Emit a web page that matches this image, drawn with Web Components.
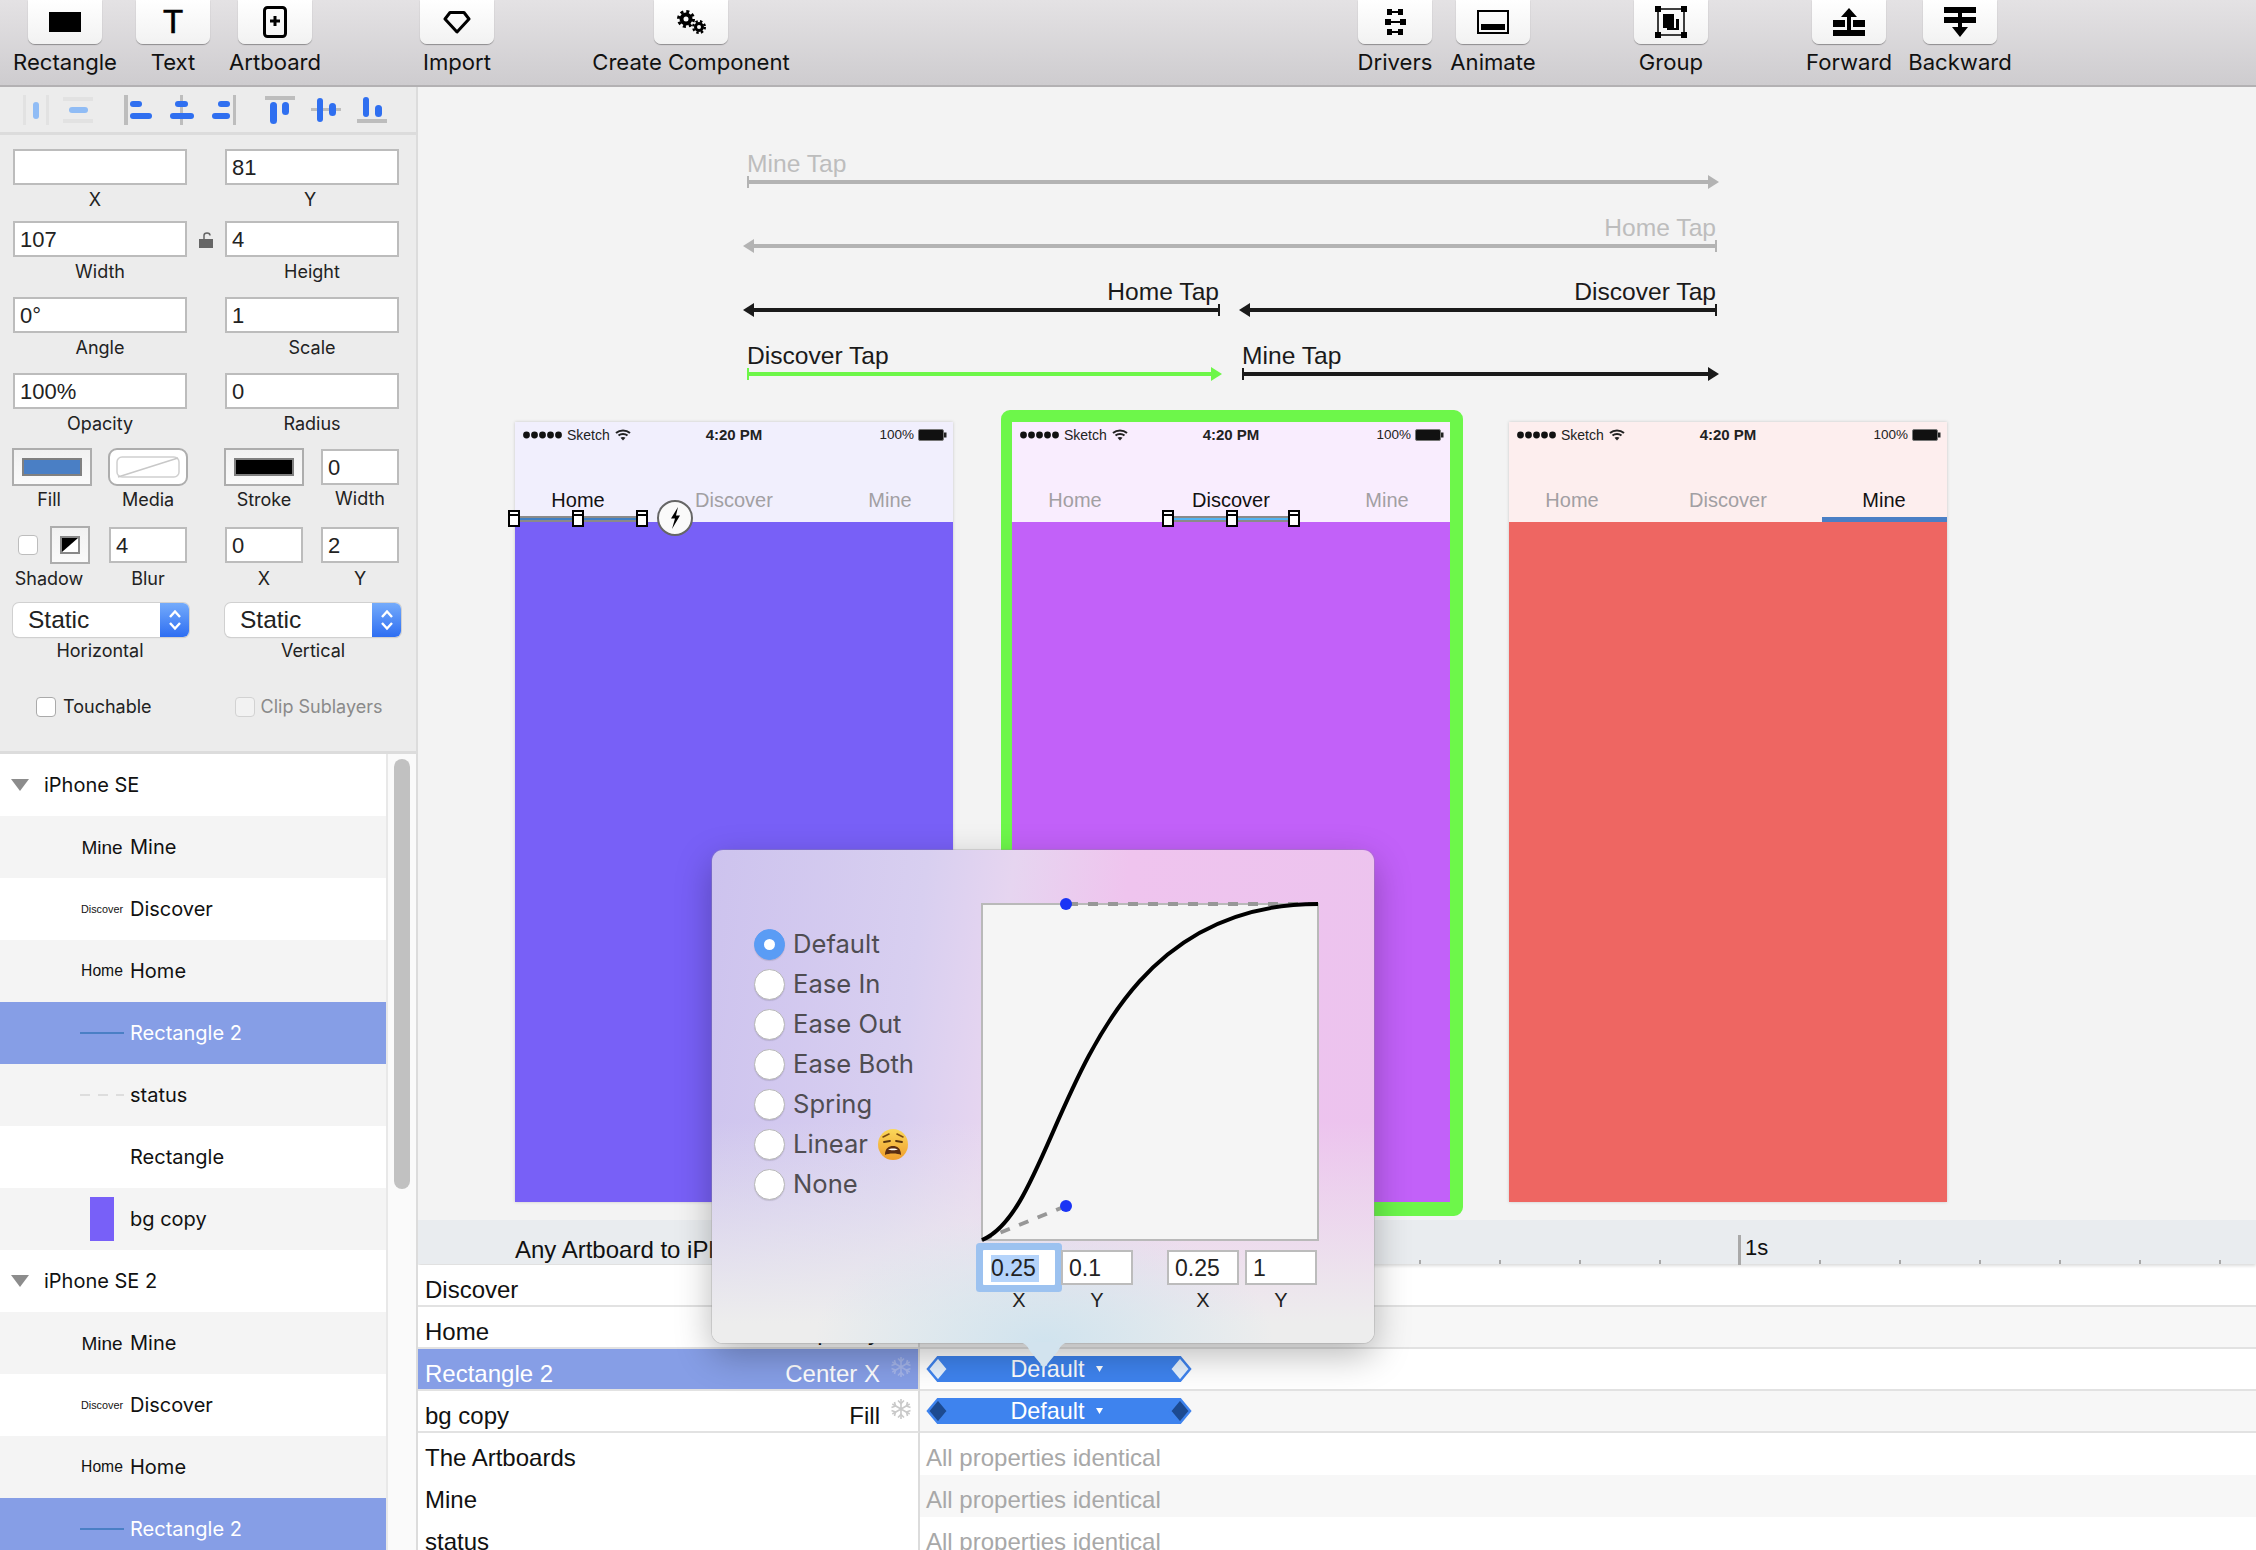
<!DOCTYPE html>
<html>
<head>
<meta charset="utf-8">
<title>Animation editor</title>
<style>
    html, body { margin: 0; height: 100%; overflow: hidden; background: #f3f3f3; }
</style>
</head>
<body>
<app-window></app-window>

<script>
const UI_FONT = `Inter, 'Liberation Sans', sans-serif`;
const HELV = `'Liberation Sans', Arial, sans-serif`;

class ToolButton extends HTMLElement {
    constructor() {
        super();
        this.attachShadow({ mode: "open" });
        this.shadowRoot.innerHTML = /*html*/ `
            <style>
                :host { display: flex; flex-direction: column; align-items: center; width: 74px; flex: none; }
                .btn {
                    width: 74px; height: 44px; box-sizing: border-box; border-radius: 0 0 7px 7px;
                    background: linear-gradient(#fff, #f2f2f2);
                    box-shadow: 0 1px 1px rgba(0,0,0,.35);
                    display: flex; align-items: center; justify-content: center;
                    font: 33px/44px ${HELV}; color: #000; -webkit-text-stroke: .6px #000;
                }
                .label { font: 22.1px/26px ${UI_FONT}; white-space: nowrap; margin-top: 5px; color: #111; }
            </style>
            <div class="btn"><slot></slot></div>
            <div class="label">${this.getAttribute("label")}</div>
        `;
    }
}
customElements.define("tool-button", ToolButton);

class ToolBar extends HTMLElement {
    constructor() {
        super();
        this.attachShadow({ mode: "open" });
        this.shadowRoot.innerHTML = /*html*/ `
            <style>
                :host {
                    display: flex; height: 85px; padding-left: 28px; box-sizing: content-box;
                    background: linear-gradient(#e4e2e4, #cecccf);
                    border-bottom: 2px solid #b3b1b3;
                }
            </style>
            <slot></slot>
        `;
    }
}
customElements.define("tool-bar", ToolBar);

class AlignBar extends HTMLElement {
    constructor() {
        super();
        this.attachShadow({ mode: "open" });
        const bar = (x, y, w, h, c) => `<rect x="${x}" y="${y - 87}" width="${w}" height="${h}" rx="${c === "g" || c === "l" ? 0 : Math.min(w, h) / 2}" fill="${c === "g" ? "#bdbdbd" : c === "l" ? "#e2e2e2" : c === "p" ? "#90bcf5" : "#2f6ff0"}"/>`;
        this.shadowRoot.innerHTML = /*html*/ `
            <style>
                :host { display: block; height: 45px; border-bottom: 3px solid #dcdcdc; }
                svg { display: block; }
            </style>
            <svg width="416" height="45">
                ${bar(23, 95, 3, 30, "l")}${bar(46, 95, 3, 30, "l")}${bar(33, 102, 6, 17, "p")}
                ${bar(63, 97, 30, 4, "l")}${bar(63, 119, 30, 4, "l")}${bar(69, 107, 19, 6, "p")}
                ${bar(124, 95, 4, 30, "g")}${bar(130, 101, 12, 6, "b")}${bar(130, 113, 22, 6, "b")}
                ${bar(180, 95, 3, 30, "g")}${bar(175, 101, 13, 6, "b")}${bar(170, 113, 24, 6, "b")}
                ${bar(233, 95, 3, 30, "g")}${bar(218, 101, 12, 6, "b")}${bar(212, 113, 18, 6, "b")}
                ${bar(265, 96, 30, 4, "g")}${bar(270, 102, 7, 22, "b")}${bar(282, 102, 7, 13, "b")}
                ${bar(311, 108, 30, 3, "g")}${bar(317, 98, 6, 24, "b")}${bar(329, 103, 7, 13, "b")}
                ${bar(357, 119, 30, 4, "g")}${bar(363, 97, 6, 20, "b")}${bar(375, 105, 7, 12, "b")}
            </svg>
        `;
    }
}
customElements.define("align-bar", AlignBar);

class PropField extends HTMLElement {
    constructor() {
        super();
        this.attachShadow({ mode: "open" });
        const value = this.getAttribute("value") || "";
        this.shadowRoot.innerHTML = /*html*/ `
            <style>
                :host { display: block; flex: none; }
                .box {
                    height: 36px; box-sizing: border-box; background: #fff; border: 2px solid #bcbcbc;
                    padding-left: 5px; font: 22px/34px ${HELV}; color: #222;
                }
                .label {
                    text-align: center; font: 18px/28px ${UI_FONT}; color: #222;
                    transform: translateX(var(--shift, 0)); margin-top: var(--gap, 1px); white-space: nowrap;
                }
            </style>
            <slot><div class="box">${value}</div></slot>
            <div class="label">${this.getAttribute("label")}</div>
        `;
    }
}
customElements.define("prop-field", PropField);

class ColorWell extends HTMLElement {
    constructor() {
        super();
        this.attachShadow({ mode: "open" });
        const kind = this.getAttribute("kind");
        const color = this.getAttribute("color");
        let inner = `<div class="chip" style="background:${color}"></div>`;
        if (kind === "media") {
            inner = /*html*/ `<svg width="64" height="22"><rect x="1" y="1" width="62" height="20" rx="5" fill="#fff" stroke="#d0d0d0" stroke-width="1.5"/><path d="M2 21L62 2" stroke="#c8c8c8" stroke-width="1.5"/></svg>`;
        }
        if (kind === "shadow") {
            inner = /*html*/ `<svg width="20" height="18"><rect x="1" y="1" width="18" height="16" fill="#fff" stroke="#888" stroke-width="2"/><path d="M2 2H18L2 16Z" fill="#000"/></svg>`;
        }
        this.shadowRoot.innerHTML = /*html*/ `
            <style>
                :host {
                    display: flex; align-items: center; justify-content: center; box-sizing: border-box;
                    height: 38px; border: 2px solid #adadad; background: linear-gradient(#f1f1f1, #fafafa);
                }
                :host([kind="media"]) { border-radius: 9px; background: #fff; }
                .chip { width: 60px; height: 18px; box-sizing: border-box; border: 2px solid #808080; }
                svg { display: block; }
            </style>
            ${inner}
        `;
    }
}
customElements.define("color-well", ColorWell);

class SelectBox extends HTMLElement {
    constructor() {
        super();
        this.attachShadow({ mode: "open" });
        this.shadowRoot.innerHTML = /*html*/ `
            <style>
                :host {
                    display: flex; height: 34px; border-radius: 6px; overflow: hidden; background: #fff;
                    box-shadow: 0 0 0 1px #d0d0d0, 0 1px 1px rgba(0,0,0,.2);
                    font: 24.5px/34px ${HELV}; color: #222;
                }
                .text { flex: 1; padding-left: 15px; }
                .arrows {
                    width: 29px; display: flex; align-items: center; justify-content: center;
                    background: linear-gradient(#74abfb, #2e6ef2);
                }
                svg { display: block; }
            </style>
            <div class="text"><slot></slot></div>
            <div class="arrows">
                <svg width="14" height="22" fill="none" stroke="#fff" stroke-width="2.4"><path d="M2 8L7 2.5L12 8"/><path d="M2 14L7 19.5L12 14"/></svg>
            </div>
        `;
    }
}
customElements.define("select-box", SelectBox);

class CheckLabel extends HTMLElement {
    constructor() {
        super();
        this.attachShadow({ mode: "open" });
        this.shadowRoot.innerHTML = /*html*/ `
            <style>
                :host { display: flex; align-items: center; gap: 7px; font: 18px/20px ${UI_FONT}; color: #222; flex: none; }
                :host([disabled]) { color: #8a8a8a; }
                .box { width: 20px; height: 20px; box-sizing: border-box; background: #fff; border: 1px solid #aaa; border-radius: 4px; }
                :host([disabled]) .box { border-color: #d2d2d2; background: #f2f2f2; }
            </style>
            <div class="box"></div><slot></slot>
        `;
    }
}
customElements.define("check-label", CheckLabel);

class PropPanel extends HTMLElement {
    constructor() {
        super();
        this.attachShadow({ mode: "open" });
        this.shadowRoot.innerHTML = /*html*/ `
            <style>
                :host { display: block; height: 664px; flex: none; background: #ececec; border-bottom: 3px solid #dcdcdc; box-sizing: content-box; }
                .row { display: flex; align-items: flex-start; padding-left: 13px; }
                .lock { width: 38px; display: flex; justify-content: center; padding-top: 11px; }
            </style>
            <align-bar></align-bar>
            <div class="row" style="height:72px;margin-top:14px;gap:38px">
                <prop-field label="X" style="width:174px;--shift:-5px"></prop-field>
                <prop-field label="Y" value="81" style="width:174px;--shift:-2px"></prop-field>
            </div>
            <div class="row" style="height:76px">
                <prop-field label="Width" value="107" style="width:174px"></prop-field>
                <div class="lock"><svg width="14" height="16"><path d="M5 8V3.5C5 2 6.5 1 8 1S11 2 11 3.5" fill="none" stroke="#666" stroke-width="1.5"/><rect y="7" width="14" height="9" fill="#666"/></svg></div>
                <prop-field label="Height" value="4" style="width:174px"></prop-field>
            </div>
            <div class="row" style="height:76px;gap:38px">
                <prop-field label="Angle" value="0°" style="width:174px"></prop-field>
                <prop-field label="Scale" value="1" style="width:174px"></prop-field>
            </div>
            <div class="row" style="height:75px;gap:38px">
                <prop-field label="Opacity" value="100%" style="width:174px"></prop-field>
                <prop-field label="Radius" value="0" style="width:174px"></prop-field>
            </div>
            <div class="row" style="height:78px;padding-left:12px">
                <prop-field label="Fill" style="width:80px;--shift:-3px;--gap:0"><color-well color="#4a7fc5"></color-well></prop-field>
                <prop-field label="Media" style="width:80px;margin-left:16px;--gap:0"><color-well kind="media"></color-well></prop-field>
                <prop-field label="Stroke" style="width:80px;margin-left:36px;--gap:0"><color-well color="#000"></color-well></prop-field>
                <prop-field label="Width" value="0" style="width:78px;margin-left:17px;margin-top:1px;--gap:0"></prop-field>
            </div>
            <div class="row" style="height:77px;padding-left:12px">
                <prop-field label="Shadow" style="width:80px;--shift:-3px;--gap:1px">
                    <div style="display:flex;align-items:center;height:38px">
                        <span style="width:20px;height:20px;margin-left:6px;box-sizing:border-box;background:#fff;border:1px solid #bdbdbd;border-radius:4px;flex:none"></span>
                        <color-well kind="shadow" style="width:40px;margin-left:12px"></color-well>
                    </div>
                </prop-field>
                <prop-field label="Blur" value="4" style="width:78px;margin-left:17px;margin-top:1px;--gap:2px"></prop-field>
                <prop-field label="X" value="0" style="width:78px;margin-left:38px;margin-top:1px;--gap:2px"></prop-field>
                <prop-field label="Y" value="2" style="width:78px;margin-left:18px;margin-top:1px;--gap:2px"></prop-field>
            </div>
            <div class="row" style="height:94px;gap:36px">
                <prop-field label="Horizontal" style="width:176px;--gap:0;--shift:-1px"><select-box>Static</select-box></prop-field>
                <prop-field label="Vertical" style="width:176px;--gap:0"><select-box>Static</select-box></prop-field>
            </div>
            <div class="row" style="padding-left:36px">
                <check-label>Touchable</check-label>
                <check-label disabled style="margin-left:83px;gap:6px">Clip Sublayers</check-label>
            </div>
        `;
    }
}
customElements.define("prop-panel", PropPanel);

class LayerRow extends HTMLElement {
    constructor() {
        super();
        this.attachShadow({ mode: "open" });
        const name = this.getAttribute("name");
        const isGroup = this.hasAttribute("group");
        this.shadowRoot.innerHTML = /*html*/ `
            <style>
                :host {
                    display: flex; align-items: center; height: 62px; flex: none; background: #fff;
                    font: 20px/24px ${UI_FONT}; color: #111; padding-left: 80px;
                }
                :host([alt]) { background: #f4f4f4; }
                :host([selected]) { background: #869ee6; color: #fff; }
                :host([group]) { padding-left: 11px; }
                .thumb { width: 44px; display: flex; justify-content: center; align-items: center; margin-right: 6px; white-space: nowrap; line-height: 1; }
                svg { display: block; margin-right: 15px; }
            </style>
            ${isGroup
                ? `<svg width="18" height="12"><path d="M0 0H18L9 12Z" fill="#8c8c8c"/></svg>`
                : `<div class="thumb"><slot></slot></div>`}
            <span>${name}</span>
        `;
    }
}
customElements.define("layer-row", LayerRow);

class LayerList extends HTMLElement {
    constructor() {
        super();
        this.attachShadow({ mode: "open" });
        const thumbs = {
            Mine: `<span style="font:19px ${HELV};position:relative;top:1px">Mine</span>`,
            Discover: `<span style="font:10.8px ${HELV}">Discover</span>`,
            Home: `<span style="font:15.7px ${HELV}">Home</span>`,
            line: `<span style="display:block;width:44px;height:2px;background:#4a7fc5"></span>`,
            dash: `<span style="display:block;width:44px;height:2px;background:repeating-linear-gradient(90deg,#ddd 0 10px,transparent 10px 18px)"></span>`,
            bg: `<span style="display:block;width:24px;height:44px;background:#7860f8"></span>`,
        };
        this.shadowRoot.innerHTML = /*html*/ `
            <style>
                :host { display: flex; flex: 1; min-height: 0; overflow: hidden; }
                .rows { flex: 1; display: flex; flex-direction: column; }
                .track { width: 30px; box-sizing: border-box; background: #fafafa; border-left: 2px solid #e8e8e8; padding: 5px 6px 0 6px; }
                .thumb { height: 430px; border-radius: 8px; background: #c1c1c1; }
            </style>
            <div class="rows">
                <layer-row group name="iPhone SE"></layer-row>
                <layer-row alt name="Mine">${thumbs.Mine}</layer-row>
                <layer-row name="Discover">${thumbs.Discover}</layer-row>
                <layer-row alt name="Home">${thumbs.Home}</layer-row>
                <layer-row selected name="Rectangle 2">${thumbs.line}</layer-row>
                <layer-row alt name="status">${thumbs.dash}</layer-row>
                <layer-row name="Rectangle"></layer-row>
                <layer-row alt name="bg copy">${thumbs.bg}</layer-row>
                <layer-row group name="iPhone SE 2"></layer-row>
                <layer-row alt name="Mine">${thumbs.Mine}</layer-row>
                <layer-row name="Discover">${thumbs.Discover}</layer-row>
                <layer-row alt name="Home">${thumbs.Home}</layer-row>
                <layer-row selected name="Rectangle 2">${thumbs.line}</layer-row>
            </div>
            <div class="track"><div class="thumb"></div></div>
        `;
    }
}
customElements.define("layer-list", LayerList);

class TapArrow extends HTMLElement {
    constructor() {
        super();
        this.attachShadow({ mode: "open" });
        const w = Number(this.getAttribute("length"));
        const color = this.getAttribute("color");
        const left = this.hasAttribute("left");
        const shape = left
            ? `<path d="M0 7L11 0V14Z" fill="${color}"/><rect x="10" y="5" width="${w - 10}" height="4" fill="${color}"/><rect x="${w - 2}" y="1" width="2" height="12" fill="${color}"/>`
            : `<rect y="1" width="2" height="12" fill="${color}"/><rect y="5" width="${w - 10}" height="4" fill="${color}"/><path d="M${w} 7L${w - 11} 0V14Z" fill="${color}"/>`;
        this.shadowRoot.innerHTML = /*html*/ `
            <style>
                :host { display: block; flex: none; width: ${w}px; color: ${color === "#b3b3b3" ? "#bdbdbd" : "#1a1a1a"}; }
                .label { font: 24.6px/28px ${HELV}; margin-bottom: -3px; text-align: ${left ? "right" : "left"}; padding: 0 1px 0 0; }
                svg { display: block; }
            </style>
            <div class="label"><slot></slot></div>
            <svg width="${w}" height="14">${shape}</svg>
        `;
    }
}
customElements.define("tap-arrow", TapArrow);

class SelHandles extends HTMLElement {
    constructor() {
        super();
        this.attachShadow({ mode: "open" });
        const from = Number(this.getAttribute("from"));
        const to = Number(this.getAttribute("to"));
        const mid = Number(this.getAttribute("mid"));
        const handle = (x) => `<i style="left:${x - from - 6}px"></i>`;
        this.shadowRoot.innerHTML = /*html*/ `
            <style>
                :host { position: absolute; left: ${from}px; top: 94px; width: ${to - from}px; height: 6px; background: #8a8a8a; }
                .line { position: absolute; left: 0; right: 0; top: 2px; height: 2px; background: ${this.getAttribute("color")}; }
                i {
                    position: absolute; top: -6px; width: 12px; height: 17px; box-sizing: border-box;
                    border: 2.5px solid #000; background: linear-gradient(#fff 2px, #000 2px 4px, #fff 4px);
                }
            </style>
            <div class="line"></div>
            ${handle(from)}${handle(mid)}${handle(to)}
        `;
    }
}
customElements.define("sel-handles", SelHandles);

class ArtBoard extends HTMLElement {
    constructor() {
        super();
        this.attachShadow({ mode: "open" });
        const active = this.getAttribute("active");
        const tab = (name) => `<span class="${name === active ? "on" : ""}">${name}</span>`;
        this.shadowRoot.innerHTML = /*html*/ `
            <style>
                :host {
                    display: flex; flex-direction: column; position: relative; flex: none;
                    width: 438px; height: 780px; box-shadow: 0 0 3px rgba(0,0,0,.18);
                }
                :host([picked])::before {
                    content: ""; position: absolute; inset: -12px -13px -14px -11px;
                    border: solid #6df74a; border-width: 12px 13px 14px 11px; border-radius: 9px;
                }
                .head { height: 100px; background: var(--tint); display: flex; flex-direction: column; color: #222; }
                .status {
                    display: grid; grid-template-columns: 1fr auto 1fr; align-items: center;
                    height: 24px; margin-top: 1px; padding: 0 6px 0 8px; font: 14px/24px ${HELV};
                }
                .status > div { display: flex; align-items: center; gap: 5px; }
                .status .right { justify-content: flex-end; font-size: 13.5px; gap: 4px; }
                .time { font-weight: 700; font-size: 15px; transform: translateX(-1px); }
                .tabs {
                    display: grid; grid-template-columns: 126px 186px 126px; justify-items: center;
                    margin-top: 41px; font: 20px/24px ${HELV}; color: #a29fa3;
                }
                .tabs .on { color: #111; }
                .body { flex: 1; background: var(--body); }
                svg { display: block; }
            </style>
            <div class="head">
                <div class="status">
                    <div>
                        <svg width="39" height="8" fill="#111"><circle cx="3.5" cy="4" r="3.4"/><circle cx="11.5" cy="4" r="3.4"/><circle cx="19.5" cy="4" r="3.4"/><circle cx="27.5" cy="4" r="3.4"/><circle cx="35.5" cy="4" r="3.4"/></svg>
                        <span>Sketch</span>
                        <svg width="16" height="12" fill="none" stroke="#222" stroke-width="2"><path d="M1 4C5 .5 11 .5 15 4"/><path d="M3.5 6.5C6 4.5 10 4.5 12.5 6.5"/><path d="M8 11.5L5.5 8.7C7 7.6 9 7.6 10.5 8.7Z" fill="#222" stroke="none"/></svg>
                    </div>
                    <div class="time">4:20 PM</div>
                    <div class="right">
                        <span>100%</span>
                        <svg width="29" height="12"><rect x=".5" y=".5" width="25" height="11" rx="1.5" fill="#111" stroke="#777"/><rect x="26" y="3.5" width="2.5" height="5" fill="#222"/></svg>
                    </div>
                </div>
                <div class="tabs">${tab("Home")}${tab("Discover")}${tab("Mine")}</div>
            </div>
            <div class="body"></div>
            <slot></slot>
        `;
    }
}
customElements.define("art-board", ArtBoard);

class BoltBadge extends HTMLElement {
    constructor() {
        super();
        this.attachShadow({ mode: "open" });
        this.shadowRoot.innerHTML = /*html*/ `
            <style>
                :host {
                    position: absolute; left: 142px; top: 78px; width: 36px; height: 36px; box-sizing: border-box;
                    border-radius: 50%; border: 2px solid #666; background: #fafafa;
                    display: flex; align-items: center; justify-content: center;
                }
                svg { display: block; }
            </style>
            <svg width="12" height="22"><path d="M9 0L2 11.5H6L3 22L11 8.5H7Z" fill="#000"/></svg>
        `;
    }
}
customElements.define("bolt-badge", BoltBadge);

class CanvasView extends HTMLElement {
    constructor() {
        super();
        this.attachShadow({ mode: "open" });
        this.shadowRoot.innerHTML = /*html*/ `
            <style>
                :host { display: block; height: 1133px; background: #f3f3f3; padding-top: 63px; box-sizing: border-box; overflow: hidden; }
                .row { display: flex; height: 64px; }
                .boards { display: flex; margin: 16px 0 0 97px; }
            </style>
            <div class="row" style="margin-left:329px"><tap-arrow length="972" color="#b3b3b3">Mine Tap</tap-arrow></div>
            <div class="row" style="margin-left:325px"><tap-arrow left length="974" color="#b3b3b3">Home Tap</tap-arrow></div>
            <div class="row" style="margin-left:325px;gap:19px">
                <tap-arrow left length="477" color="#1a1a1a">Home Tap</tap-arrow>
                <tap-arrow left length="478" color="#1a1a1a">Discover Tap</tap-arrow>
            </div>
            <div class="row" style="margin-left:329px;gap:20px">
                <tap-arrow length="475" color="#6df648">Discover Tap</tap-arrow>
                <tap-arrow length="477" color="#1a1a1a">Mine Tap</tap-arrow>
            </div>
            <div class="boards">
                <art-board active="Home" style="--tint:#f1effd;--body:#7860f7">
                    <sel-handles from="-1" mid="63" to="127" color="#3f7fc4"></sel-handles>
                    <bolt-badge></bolt-badge>
                </art-board>
                <art-board picked active="Discover" style="--tint:#f9edfe;--body:#c261f9;margin-left:59px">
                    <sel-handles from="156" mid="220" to="282" color="#52b4f2"></sel-handles>
                </art-board>
                <art-board active="Mine" style="--tint:#fdeeee;--body:#ee6662;margin-left:59px">
                    <div style="position:absolute;right:0;top:95px;width:125px;height:5px;background:#4a7fc5"></div>
                </art-board>
            </div>
        `;
    }
}
customElements.define("canvas-view", CanvasView);

class EaseBar extends HTMLElement {
    constructor() {
        super();
        this.attachShadow({ mode: "open" });
        const dark = this.hasAttribute("dark");
        const fill = dark ? "#1c4a90" : "#e6f2fe";
        this.shadowRoot.innerHTML = /*html*/ `
            <style>
                :host {
                    display: flex; align-items: center; justify-content: center; position: relative;
                    width: 266px; height: 26px; margin: 7px 0 0 0;
                    font: 23.4px/26px ${HELV}; color: #fff;
                }
                svg { position: absolute; left: 0; top: 0; }
                .t { position: relative; display: flex; gap: 11px; align-items: center; margin-right: 5px; }
                .t svg { position: static; }
            </style>
            <svg width="266" height="26">
                <rect x="12" y="0" width="242" height="26" fill="#3e83ee"/>
                <path d="M12 1L2 13L12 25L22 13Z" fill="${fill}" stroke="#3e83ee" stroke-width="2.5"/>
                <path d="M254 1L244 13L254 25L264 13Z" fill="${fill}" stroke="#3e83ee" stroke-width="2.5"/>
            </svg>
            <div class="t"><slot></slot><svg width="7" height="6"><path d="M0 0H7L3.5 6Z" fill="#fff"/></svg></div>
        `;
    }
}
customElements.define("ease-bar", EaseBar);

class TimeRow extends HTMLElement {
    constructor() {
        super();
        this.attachShadow({ mode: "open" });
        const prop = this.getAttribute("prop");
        const flake = /*html*/ `
            <svg class="flake" width="22" height="22" viewBox="0 0 22 22" fill="none" stroke-width="1.6">
                <path d="M11 1V21M2.3 6L19.7 16M2.3 16L19.7 6"/>
                <path d="M8 2.5L11 5.5L14 2.5M8 19.5L11 16.5L14 19.5M1.5 9.5L5.5 8L4.5 4M20.5 12.5L16.5 14L17.5 18M1.5 12.5L5.5 14L4.5 18M20.5 9.5L16.5 8L17.5 4"/>
            </svg>`;
        this.shadowRoot.innerHTML = /*html*/ `
            <style>
                :host {
                    display: grid; grid-template-columns: 502px 1fr; height: 42px; flex: none;
                    font: 24px/30px ${HELV}; color: #111;
                }
                .left {
                    display: flex; box-sizing: border-box; padding: 10px 38px 0 7px; position: relative; background: #fff;
                    border-bottom: 3px solid #e2e2e2; border-right: 2px solid #dcdcdc;
                }
                .name { flex: 1; }
                .prop { white-space: nowrap; }
                .flake { position: absolute; right: 6px; top: 7px; stroke: #c9c9c9; }
                :host([selected]) .left { background: #869ee6; color: #fff; }
                :host([selected]) .flake { stroke: #a5b5e9; }
                .right {
                    background: #fff; border-bottom: 3px solid #e2e2e2; color: #a8a8a8;
                    box-sizing: border-box; padding-left: 6px; line-height: 50px; display: flex;
                }
                :host([alt]) .right { background: #f7f7f7; }
            </style>
            <div class="left">
                <span class="name">${this.getAttribute("name")}</span>
                ${prop ? `<span class="prop">${prop}</span>` : ""}
                ${this.hasAttribute("frozen") ? flake : ""}
            </div>
            <div class="right"><slot></slot></div>
        `;
    }
}
customElements.define("time-row", TimeRow);

class TimeLine extends HTMLElement {
    constructor() {
        super();
        this.attachShadow({ mode: "open" });
        this.shadowRoot.innerHTML = /*html*/ `
            <style>
                :host { display: flex; flex-direction: column; flex: 1; min-height: 0; overflow: hidden; background: #fff; }
                .ruler {
                    display: grid; grid-template-columns: 1321px 1fr; height: 44px; flex: none; margin-bottom: 1px;
                    background-color: #e9ecef;
                    background-image: repeating-linear-gradient(90deg, #a9a9a9 0 2px, transparent 2px 80px);
                    background-size: 100% 4px; background-position: 1001px bottom; background-repeat: no-repeat;
                    box-shadow: 0 2px 3px rgba(0,0,0,.14); position: relative;
                    font: 24px/30px ${HELV}; color: #111;
                }
                .title { padding: 15px 0 0 97px; white-space: nowrap; }
                .mark { align-self: end; height: 30px; border-left: 3px solid #a9a9a9; padding-left: 4px; font-size: 22px; line-height: 26px; margin-left: -1px; }
            </style>
            <div class="ruler">
                <div class="title">Any Artboard to iPhone SE</div>
                <div class="mark">1s</div>
            </div>
            <time-row name="Discover"></time-row>
            <time-row alt name="Home" prop="Opacity"></time-row>
            <time-row selected frozen name="Rectangle 2" prop="Center X"><ease-bar>Default</ease-bar></time-row>
            <time-row alt frozen name="bg copy" prop="Fill"><ease-bar dark>Default</ease-bar></time-row>
            <time-row name="The Artboards">All properties identical</time-row>
            <time-row alt name="Mine">All properties identical</time-row>
            <time-row name="status">All properties identical</time-row>
        `;
    }
}
customElements.define("time-line", TimeLine);

class RadioOption extends HTMLElement {
    constructor() {
        super();
        this.attachShadow({ mode: "open" });
        this.shadowRoot.innerHTML = /*html*/ `
            <style>
                :host { display: flex; align-items: center; height: 40px; gap: 8px; font: 25.6px/40px ${UI_FONT}; color: #4f4d52; white-space: nowrap; }
                .dot {
                    width: 31px; height: 31px; box-sizing: border-box; border-radius: 50%; background: #fff;
                    border: 1px solid #b9b9b9; box-shadow: 0 1px 1px rgba(0,0,0,.12); flex: none;
                    display: flex; align-items: center; justify-content: center;
                }
                :host([checked]) .dot { background: #5a9cf5; border-color: #5a9cf5; }
                :host([checked]) .dot::after { content: ""; width: 11px; height: 11px; border-radius: 50%; background: #fff; }
            </style>
            <div class="dot"></div><slot></slot>
        `;
    }
}
customElements.define("radio-option", RadioOption);

class CurveInput extends HTMLElement {
    constructor() {
        super();
        this.attachShadow({ mode: "open" });
        const value = this.getAttribute("value");
        this.shadowRoot.innerHTML = /*html*/ `
            <style>
                :host { display: block; flex: none; width: 72px; }
                .box {
                    height: 35px; box-sizing: border-box; background: #fff; border: 2px solid #bcbcbc;
                    font: 23px/32px ${HELV}; color: #222; padding-left: 6px;
                }
                :host([focused]) .box { border-color: #fff; box-shadow: 0 0 0 7px #9cc2f0; border-radius: 1px; }
                :host([focused]) span { background: #b5d4fb; display: inline-block; line-height: 27px; padding-right: 3px; }
                .label { text-align: center; font: 20px/30px ${HELV}; color: #222; }
            </style>
            <div class="box"><span>${value}</span></div>
            <div class="label">${this.getAttribute("label")}</div>
        `;
    }
}
customElements.define("curve-input", CurveInput);

class CurvePopover extends HTMLElement {
    constructor() {
        super();
        this.attachShadow({ mode: "open" });
        this.shadowRoot.innerHTML = /*html*/ `
            <style>
                :host { position: absolute; left: 712px; top: 850px; width: 662px; height: 493px; display: block; }
                .panel {
                    position: absolute; inset: 0; border-radius: 11px; display: flex;
                    padding: 54px 0 0 42px; box-sizing: border-box;
                    background:
                        radial-gradient(ellipse 230px 130px at 332px 100%, #d0e3ee 0, rgba(208,227,238,0) 100%),
                        linear-gradient(to bottom, rgba(237,237,237,0) 55%, #ededed 96%),
                        linear-gradient(97deg, #cdc3ee 0, #d8cff0 30%, #e6d5f0 42%, #efc4ee 58%, #ecc3ee 100%);
                    box-shadow: 0 0 0 1px rgba(150,150,150,.3), 0 12px 36px rgba(0,0,0,.28);
                }
                .tip { position: absolute; left: 304px; top: 493px; display: block; z-index: 1; }
                .options { width: 228px; padding-top: 20px; box-sizing: border-box; }
                .emoji { display: block; margin-left: 2px; }
                .graph { width: 336px; }
                svg { display: block; overflow: visible; }
                .inputs { display: flex; margin: 10px 0 0 1px; }
            </style>
            <svg class="tip" width="56" height="26"><path d="M0 -1C8 -1 11 2 14 8L28 25L42 8C45 2 48 -1 56 -1Z" fill="#d2e3ee"/></svg>
            <div class="panel">
                <div class="options">
                    <radio-option checked>Default</radio-option>
                    <radio-option>Ease In</radio-option>
                    <radio-option>Ease Out</radio-option>
                    <radio-option>Ease Both</radio-option>
                    <radio-option>Spring</radio-option>
                    <radio-option>Linear
                        <svg class="emoji" width="30" height="31" viewBox="0 0 30 31">
                            <defs><linearGradient id="f" x1="0" y1="0" x2="0" y2="1"><stop offset="0" stop-color="#fbd85a"/><stop offset="1" stop-color="#ef9d2c"/></linearGradient></defs>
                            <ellipse cx="15" cy="15.5" rx="15" ry="15.5" fill="url(#f)"/>
                            <path d="M5 8L11 5M25 8L19 5" stroke="#7a4a12" stroke-width="1.6" stroke-linecap="round" fill="none"/>
                            <path d="M6 13L12 12M24 13L18 12" stroke="#5a3610" stroke-width="1.8" stroke-linecap="round" fill="none"/>
                            <path d="M7 26C7 19 11 17 15 17S23 19 23 26C20 24 10 24 7 26Z" fill="#5a2d12"/>
                            <path d="M10 20.5C12 19 18 19 20 20.5C18 21.5 12 21.5 10 20.5Z" fill="#fff"/>
                        </svg>
                    </radio-option>
                    <radio-option>None</radio-option>
                </div>
                <div class="graph">
                    <svg width="336" height="336" viewBox="0 0 336 336">
                        <rect x="0" y="0" width="336" height="336" fill="#f5f5f5" stroke="#b9b9b9" stroke-width="2"/>
                        <path d="M336 0H84M0 336L84 302" stroke="#979797" stroke-width="4" stroke-dasharray="10 10" fill="none"/>
                        <path d="M0 336C84 302 84 0 336 0" stroke="#000" stroke-width="4" fill="none"/>
                        <circle cx="84" cy="0" r="6" fill="#1a34f5"/>
                        <circle cx="84" cy="302" r="6" fill="#1a34f5"/>
                    </svg>
                    <div class="inputs">
                        <curve-input focused value="0.25" label="X"></curve-input>
                        <curve-input value="0.1" label="Y" style="margin-left:6px"></curve-input>
                        <curve-input value="0.25" label="X" style="margin-left:34px"></curve-input>
                        <curve-input value="1" label="Y" style="margin-left:6px"></curve-input>
                    </div>
                </div>
            </div>
        `;
    }
}
customElements.define("curve-popover", CurvePopover);

class AppWindow extends HTMLElement {
    constructor() {
        super();
        this.attachShadow({ mode: "open" });
        this.shadowRoot.innerHTML = /*html*/ `
            <style>
                :host { display: flex; flex-direction: column; position: relative; width: 2256px; height: 1550px; overflow: hidden; }
                .main { flex: 1; display: flex; min-height: 0; }
                .side { width: 418px; box-sizing: border-box; flex: none; display: flex; flex-direction: column; border-right: 2px solid #dcdcdc; background: #fafafa; }
                .work { flex: 1; display: flex; flex-direction: column; min-width: 0; }
                svg { display: block; }
            </style>
            <tool-bar>
                <tool-button label="Rectangle"><svg width="32" height="20"><rect width="32" height="20"/></svg></tool-button>
                <tool-button label="Text" style="margin-left:34px">T</tool-button>
                <tool-button label="Artboard" style="margin-left:28px">
                    <svg width="24" height="32" fill="none" stroke="#000" stroke-width="3"><rect x="1.5" y="1.5" width="21" height="29" rx="3"/><path d="M12 10V20M7 15H17"/></svg>
                </tool-button>
                <tool-button label="Import" style="margin-left:108px">
                    <svg width="28" height="23" fill="none" stroke="#000" stroke-width="3"><path d="M7 1.5H21L26 8L14 21L2 8Z" stroke-linejoin="round"/></svg>
                </tool-button>
                <tool-button label="Create Component" style="margin-left:160px">
                    <svg width="32" height="24">
                        <circle cx="11" cy="9" r="4.5" fill="none" stroke="#000" stroke-width="4"/>
                        <circle cx="11" cy="9" r="7.5" fill="none" stroke="#000" stroke-width="3" stroke-dasharray="3 2.9"/>
                        <circle cx="24" cy="17" r="3.5" fill="none" stroke="#000" stroke-width="3"/>
                        <circle cx="24" cy="17" r="5.8" fill="none" stroke="#000" stroke-width="2.4" stroke-dasharray="2.4 2.2"/>
                    </svg>
                </tool-button>
                <tool-button label="Drivers" style="margin-left:630px">
                    <svg width="21" height="26">
                        <path d="M2 0H7V2H13V0H18V6H13V4H7V6H2ZM0 10H6V12H15V10H21V16H15V14H6V16H0ZM2 20H7V22H13V20H18V26H13V24H7V26H2Z"/>
                    </svg>
                </tool-button>
                <tool-button label="Animate" style="margin-left:24px">
                    <svg width="32" height="24"><rect x="1" y="1" width="30" height="22" fill="none" stroke="#000" stroke-width="2"/><rect x="4" y="14" width="24" height="6"/></svg>
                </tool-button>
                <tool-button label="Group" style="margin-left:104px">
                    <svg width="32" height="32">
                        <rect x="3" y="3" width="26" height="26" fill="none" stroke="#000" stroke-width="1.5"/>
                        <path d="M0 0H6V6H0ZM26 0H32V6H26ZM0 26H6V32H0ZM26 26H32V32H26Z"/>
                        <rect x="8" y="8" width="11" height="14"/>
                        <path d="M21 13H24V24H12V22H21Z"/>
                    </svg>
                </tool-button>
                <tool-button label="Forward" style="margin-left:104px">
                    <svg width="32" height="28"><path d="M16 0L24 9H18V22H14V9H8ZM0 12H12V19H0ZM20 12H32V19H20ZM0 22H32V28H0Z"/></svg>
                </tool-button>
                <tool-button label="Backward" style="margin-left:37px">
                    <svg width="32" height="30"><path d="M0 0H32V6H18V10H32V16H18V20H24L16 30L8 20H14V16H0V10H14V6H0Z"/></svg>
                </tool-button>
            </tool-bar>
            <div class="main">
                <div class="side">
                    <prop-panel></prop-panel>
                    <layer-list></layer-list>
                </div>
                <div class="work">
                    <canvas-view></canvas-view>
                    <time-line></time-line>
                </div>
            </div>
            <curve-popover></curve-popover>
        `;
    }
}
customElements.define("app-window", AppWindow);
</script>
</body>
</html>
